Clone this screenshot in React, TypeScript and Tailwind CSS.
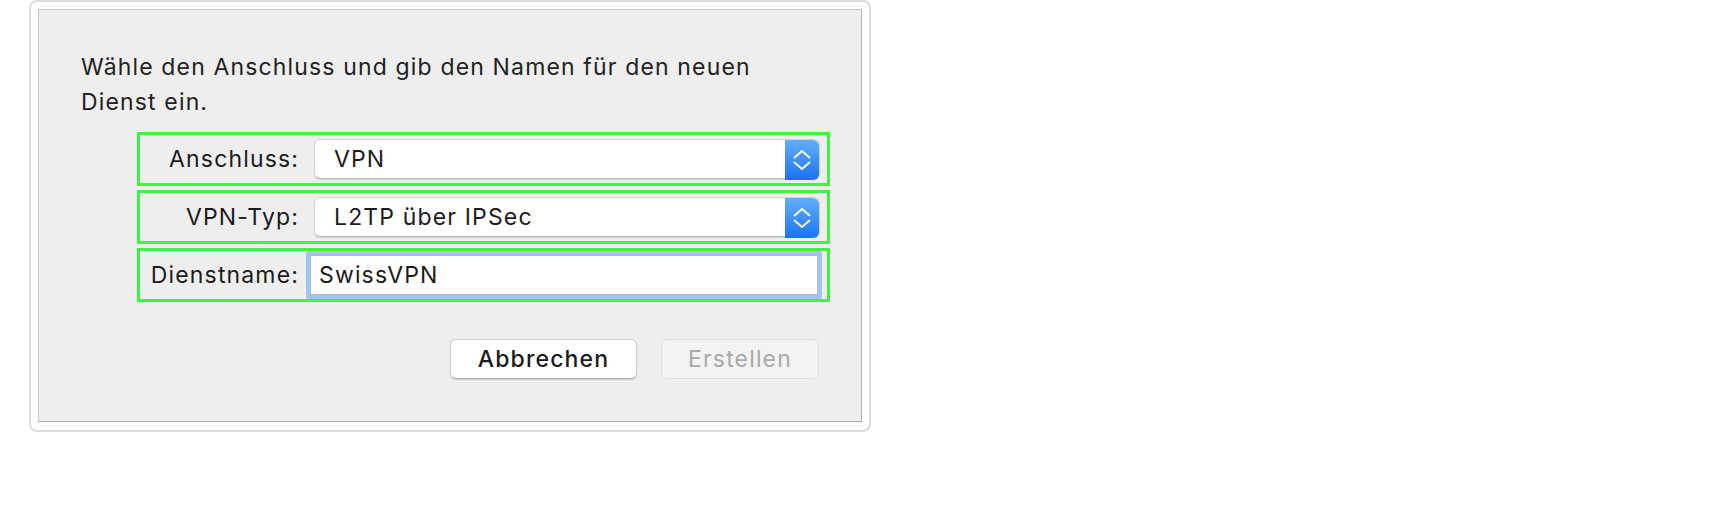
import React from "react";

const font = { fontFamily: "Inter, 'Liberation Sans', sans-serif" };

function Stepper() {
  return (
    <div className="w-[34px] h-[40px] rounded-r-[6px] bg-gradient-to-b from-[#62aefb] to-[#1a72f0] flex items-center justify-center">
      <svg width="18" height="24" viewBox="0 0 18 24" fill="none" stroke="white" strokeWidth="1.9" strokeLinecap="round" strokeLinejoin="round">
        <path d="M1.5 9.5 L9 3 L16.5 9.5" />
        <path d="M1.5 14.5 L9 21 L16.5 14.5" />
      </svg>
    </div>
  );
}

function Popup({ value }: { value: string }) {
  return (
    <div className="flex-1 mr-[7px] h-[40px] flex rounded-[6px] bg-white border border-[#d4d4d4] border-b-[#b9b9b9] shadow-[0_1px_1px_rgba(0,0,0,0.12)]">
      <div className="flex-1 flex items-center pl-[19px] text-[23px] text-[#1b1b1b]">{value}</div>
      <Stepper />
    </div>
  );
}

function Row({ label, children }: { label: string; children: React.ReactNode }) {
  return (
    <div className="flex items-center h-[54px] border-[3px] border-[#3cf53c] ml-[98px] mr-[31px]">
      <div className="w-[159px] text-right text-[23px] text-[#1b1b1b] whitespace-nowrap">{label}</div>
      {children}
    </div>
  );
}

export default function App() {
  return (
    <div className="w-[1728px] h-[512px] bg-white tracking-[1.15px]" style={font}>
      <div className="ml-[29px] w-[842px] h-[432px] border-2 border-[#dcdcdc] rounded-[8px] pt-[7px] px-[7px] pb-[8px]">
        <div className="h-full bg-[#eeeeee] border border-[#c8c8c8] border-b-[#a9a9a9] border-r-[#b5b5b5] pt-[40px]">
          <p className="pl-[42px] text-[23px] leading-[35px] text-[#222222] whitespace-nowrap">
            Wähle den Anschluss und gib den Namen für den neuen
            <br />
            Dienst ein.
          </p>
          <div className="mt-[12px] flex flex-col gap-[4px]">
            <Row label="Anschluss:">
              <div className="ml-[15px] flex-1 flex">
                <Popup value="VPN" />
              </div>
            </Row>
            <Row label="VPN-Typ:">
              <div className="ml-[15px] flex-1 flex">
                <Popup value="L2TP über IPSec" />
              </div>
            </Row>
            <Row label="Dienstname:">
              <div className="ml-[7px] mr-[5px] flex-1 h-[48px] border-[4px] border-[#9ec5ee] rounded-[2px] bg-white flex items-center">
                <div className="h-full w-full border border-[#b8b8b8] flex items-center pl-[8px] text-[23px] text-[#1b1b1b]">
                  SwissVPN
                </div>
              </div>
            </Row>
          </div>
          <div className="mt-[37px] flex justify-end gap-[24px] pr-[42px]">
            <div className="w-[187px] h-[40px] rounded-[6px] bg-white border border-[#cfcfcf] border-b-[#b3b3b3] shadow-[0_1px_1px_rgba(0,0,0,0.15)] flex items-center justify-center text-[23px] font-medium text-[#1b1b1b]">
              Abbrechen
            </div>
            <div className="w-[158px] h-[40px] rounded-[6px] bg-[#f3f3f3] border border-[#dedede] flex items-center justify-center text-[23px] text-[#a9a9a9]">
              Erstellen
            </div>
          </div>
        </div>
      </div>
    </div>
  );
}
